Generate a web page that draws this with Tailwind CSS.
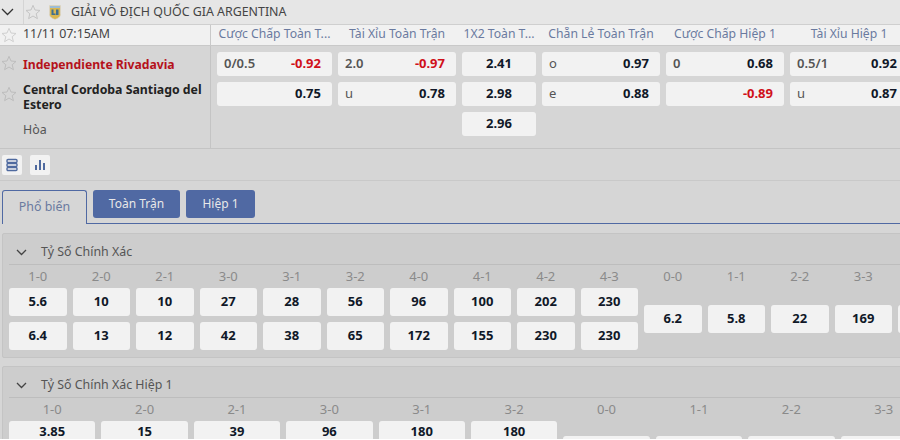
<!DOCTYPE html>
<html lang="en">
<head>
    <meta charset="UTF-8">
    <meta name="viewport" content="width=device-width, initial-scale=1.0">
    <title>Giải Vô Địch Quốc Gia Argentina</title>
    <script src="https://cdn.jsdelivr.net/npm/@tailwindcss/browser@4"></script>
</head>
<body class="w-[900px] h-[440px] overflow-hidden bg-white font-['Noto_Sans','Open_Sans',sans-serif] text-[13px] text-[#333]">
    <div class="h-[439px] overflow-hidden bg-[#d6d6d6]">

        <!-- League bar -->
        <div class="h-[25px] flex items-center bg-[#e6e6e6] border-b border-[#cfcfcf]">
            <svg class="w-[13px] h-[8px] ml-[1px]" viewBox="0 0 13 8" fill="none" stroke="#333" stroke-width="1.3"><path d="M1 1l5.500 5.500L12 1"/></svg>
            <div class="w-px h-[24px] bg-[#d4d4d4] ml-[9px]"></div>
            <svg class="w-[16px] h-[16px] ml-[1px]" viewBox="0 0 24 24" fill="none" stroke="#c4c4c4" stroke-width="1.5"><path d="M12 2l3 7 7.500 .7-5.700 4.900 1.800 7.400L12 18l-6.600 4 1.800-7.400L1.500 9.700 9 9z"/></svg>
            <svg class="w-[12px] h-[15px] ml-[8px]" viewBox="0 0 12 15"><path d="M.5 .5h11v9c0 2.500-2.800 4-5.500 5-2.700-1-5.500-2.500-5.500-5z" fill="#d9b650" stroke="#d8d8d8" stroke-width=".6"/><path d="M2.500 4.500h2v4h2v1.500h-4zM7 4.500h2.500v5.500H7z" fill="#3f6f8f"/><path d="M1 1h10v2H1z" fill="#9cbcd4"/></svg>
            <span class="ml-[10px] text-[12.400px] text-[#444]">GIẢI VÔ ĐỊCH QUỐC GIA ARGENTINA</span>
        </div>

        <!-- Match header -->
        <div class="h-[21px] flex bg-[#f1f1f1] border-b border-[#c9c9c9]">
            <div class="w-[211px] shrink-0 flex items-center pb-px border-r border-[#c9c9c9]">
                <svg class="w-[16px] h-[16px] ml-[1px]" viewBox="0 0 24 24" fill="none" stroke="#d0d0d0" stroke-width="1.5"><path d="M12 2l3 7 7.500 .7-5.700 4.900 1.800 7.400L12 18l-6.600 4 1.800-7.400L1.500 9.700 9 9z"/></svg>
                <span class="ml-[6px] text-[12.400px] text-[#444]">11/11 07:15AM</span>
            </div>
            <div class="flex pl-[6px] pb-px gap-[6px] text-[12.200px] text-[#6a7a9f] items-center whitespace-nowrap">
                <div class="w-[115px] text-center">Cược Chấp Toàn T...</div>
                <div class="w-[118px] text-center">Tài Xỉu Toàn Trận</div>
                <div class="w-[74px] text-center">1X2 Toàn T...</div>
                <div class="w-[118px] text-center">Chẵn Lẻ Toàn Trận</div>
                <div class="w-[118px] text-center">Cược Chấp Hiệp 1</div>
                <div class="w-[118px] text-center">Tài Xỉu Hiệp 1</div>
            </div>
        </div>

        <!-- Match row -->
        <div class="h-[103px] flex border-b border-[#c4c4c4]">
            <div class="w-[211px] shrink-0 border-r border-[#c4c4c4] pl-[23px] pr-1 relative">
                <div class="mt-[10px] h-[18px] leading-[18px] font-bold text-[12.200px] text-[#b5121b]">Independiente Rivadavia</div>
                <div class="mt-[9px] leading-[14.500px] font-bold text-[12.300px] text-[#222]">Central Cordoba Santiago del Estero</div>
                <div class="mt-[9px] text-[12.400px] text-[#555]">Hòa</div>
                <svg class="absolute left-[1px] top-[9px] w-[16px] h-[16px]" viewBox="0 0 24 24" fill="none" stroke="#bdbdbd" stroke-width="1.500"><path d="M12 2l3 7 7.500 .7-5.700 4.900 1.800 7.400L12 18l-6.600 4 1.800-7.400L1.500 9.700 9 9z"/></svg>
                <svg class="absolute left-[1px] top-[40px] w-[16px] h-[16px]" viewBox="0 0 24 24" fill="none" stroke="#bdbdbd" stroke-width="1.500"><path d="M12 2l3 7 7.500 .7-5.700 4.900 1.800 7.400L12 18l-6.600 4 1.800-7.400L1.500 9.700 9 9z"/></svg>
            </div>
            <div id="odds" class="flex pl-[6px] pt-[6px] gap-[6px]"></div>
        </div>

        <!-- Toolbar -->
        <div class="h-[32px] flex items-center gap-[8px] pl-[2px] border-b border-[#c9c9c9]">
            <div class="w-[20px] h-[20px] rounded-[2px] bg-[#f2f2f2] flex items-center justify-center">
                <svg class="w-[14px] h-[14px]" viewBox="0 0 14 14" fill="none" stroke="#4f6a9f" stroke-width="1.400"><rect x="2" y="1.500" width="10" height="3" rx="1"/><rect x="2" y="5.500" width="10" height="3" rx="1"/><rect x="2" y="9.500" width="10" height="3" rx="1"/></svg>
            </div>
            <div class="w-[20px] h-[20px] rounded-[2px] bg-[#f2f2f2] flex items-center justify-center">
                <svg class="w-[14px] h-[14px]" viewBox="0 0 14 14" fill="#4f6a9f"><rect x="2" y="7" width="2" height="5"/><rect x="6" y="2" width="2" height="10"/><rect x="10" y="5" width="2" height="7"/></svg>
            </div>
        </div>

        <!-- Tabs -->
        <div class="mt-[9px] h-[34px] ml-[2px] flex items-start gap-[6px] border-b border-[#5069a3]">
            <div class="w-[85px] h-[34px] flex items-center justify-center rounded-t-[3px] border border-b-0 border-[#5069a3] bg-[#d6d6d6] text-[12.400px] text-[#6a7a9f]">Phổ biến</div>
            <div class="w-[87px] h-[28px] flex items-center justify-center rounded-[3px] bg-[#5069a3] text-[12px] text-[#e8e8e8]">Toàn Trận</div>
            <div class="w-[69px] h-[28px] flex items-center justify-center rounded-[3px] bg-[#5069a3] text-[12px] text-[#e8e8e8]">Hiệp 1</div>
        </div>

        <!-- Exact score -->
        <div id="sections" class="ml-[2px] w-[960px] mt-[9px] flex flex-col gap-[8px]"></div>
    </div>

    <script>
        const odds = [
            { w: "w-[115px]", rows: [["0/0.5", "-0.92"], ["", "0.75"]] },
            { w: "w-[118px]", rows: [["2.0", "-0.97"], ["u", "0.78"]] },
            { w: "w-[74px]", rows: [["", "2.41"], ["", "2.98"], ["", "2.96"]] },
            { w: "w-[118px]", rows: [["o", "0.97"], ["e", "0.88"]] },
            { w: "w-[118px]", rows: [["0", "0.68"], ["", "-0.89"]] },
            { w: "w-[118px]", rows: [["0.5/1", "0.92"], ["u", "0.87"]] },
        ];

        function priceClass(price) {
            return price.startsWith("-") ? "text-[#d0101a]" : "text-[#101828]";
        }

        document.getElementById("odds").innerHTML = odds.map(col => `
            <div class="${col.w} shrink-0 flex flex-col gap-[6px]">
                ${col.rows.map(([label, price]) => `
                    <div class="h-[24px] rounded-[3px] bg-[#f2f2f2] flex items-center ${col.w === "w-[74px]" ? "justify-center" : label ? "justify-between pl-[7px] pr-[11px]" : "justify-end pr-[11px]"}">
                        ${label ? `<span class="${/\d/.test(label) ? "font-semibold" : ""} text-[#555]">${label}</span>` : ""}
                        <span class="font-bold ${priceClass(price)}">${price}</span>
                    </div>`).join("")}
            </div>`).join("");

        const sections = [
            {
                title: "Tỷ Số Chính Xác",
                width: "w-[57.500px]",
                cell: "h-[28px]",
                drawGap: "mt-[17px]",
                scores: [["1-0", "5.6", "6.4"], ["2-0", "10", "13"], ["2-1", "10", "12"], ["3-0", "27", "42"], ["3-1", "28", "38"], ["3-2", "56", "65"], ["4-0", "96", "172"], ["4-1", "100", "155"], ["4-2", "202", "230"], ["4-3", "230", "230"]],
                draws: [["0-0", "6.2"], ["1-1", "5.8"], ["2-2", "22"], ["3-3", "169"], ["", ""]],
            },
            {
                title: "Tỷ Số Chính Xác Hiệp 1",
                width: "w-[86.400px]",
                cell: "h-[22px]",
                drawGap: "mt-[15px]",
                scores: [["1-0", "3.85", ""], ["2-0", "15", ""], ["2-1", "39", ""], ["3-0", "96", ""], ["3-1", "180", ""], ["3-2", "180", ""]],
                draws: [["0-0", ""], ["1-1", ""], ["2-2", ""], ["3-3", ""]],
            },
        ];

        document.getElementById("sections").innerHTML = sections.map(s => `
            <div class="h-[125px] shrink-0 rounded-[2px] border border-[#c4c4c4] bg-[#cdcdcd] px-[6px]">
                <div class="h-[31px] pt-[6px] flex items-center border-b border-[#bdbdbd] text-[12.400px] text-[#555]">
                    <svg class="w-[11px] h-[7px] ml-[7px]" viewBox="0 0 11 7" fill="none" stroke="#444" stroke-width="1.300"><path d="M1 1l4.500 4.500L10 1"/></svg>
                    <span class="ml-[14px]">${s.title}</span>
                </div>
                <div class="flex gap-[6px]">
                    ${s.scores.map(([label, a, b]) => `
                        <div class="${s.width} shrink-0">
                            <div class="h-[23px] leading-[23px] text-center text-[#8a8a8a]">${label}</div>
                            <div class="${s.cell} rounded-[3px] bg-[#f2f2f2] flex items-center justify-center font-bold text-[#101828]">${a}</div>
                            <div class="mt-[6px] ${s.cell} rounded-[3px] bg-[#f2f2f2] flex items-center justify-center font-bold text-[#101828]">${b}</div>
                        </div>`).join("")}
                    ${s.draws.map(([label, a]) => `
                        <div class="${s.width} shrink-0">
                            <div class="h-[23px] leading-[23px] text-center text-[#8a8a8a]">${label}</div>
                            <div class="${s.drawGap} ${s.cell} rounded-[3px] bg-[#f2f2f2] flex items-center justify-center font-bold text-[#101828]">${a}</div>
                        </div>`).join("")}
                </div>
            </div>`).join("");
    </script>
</body>
</html>
